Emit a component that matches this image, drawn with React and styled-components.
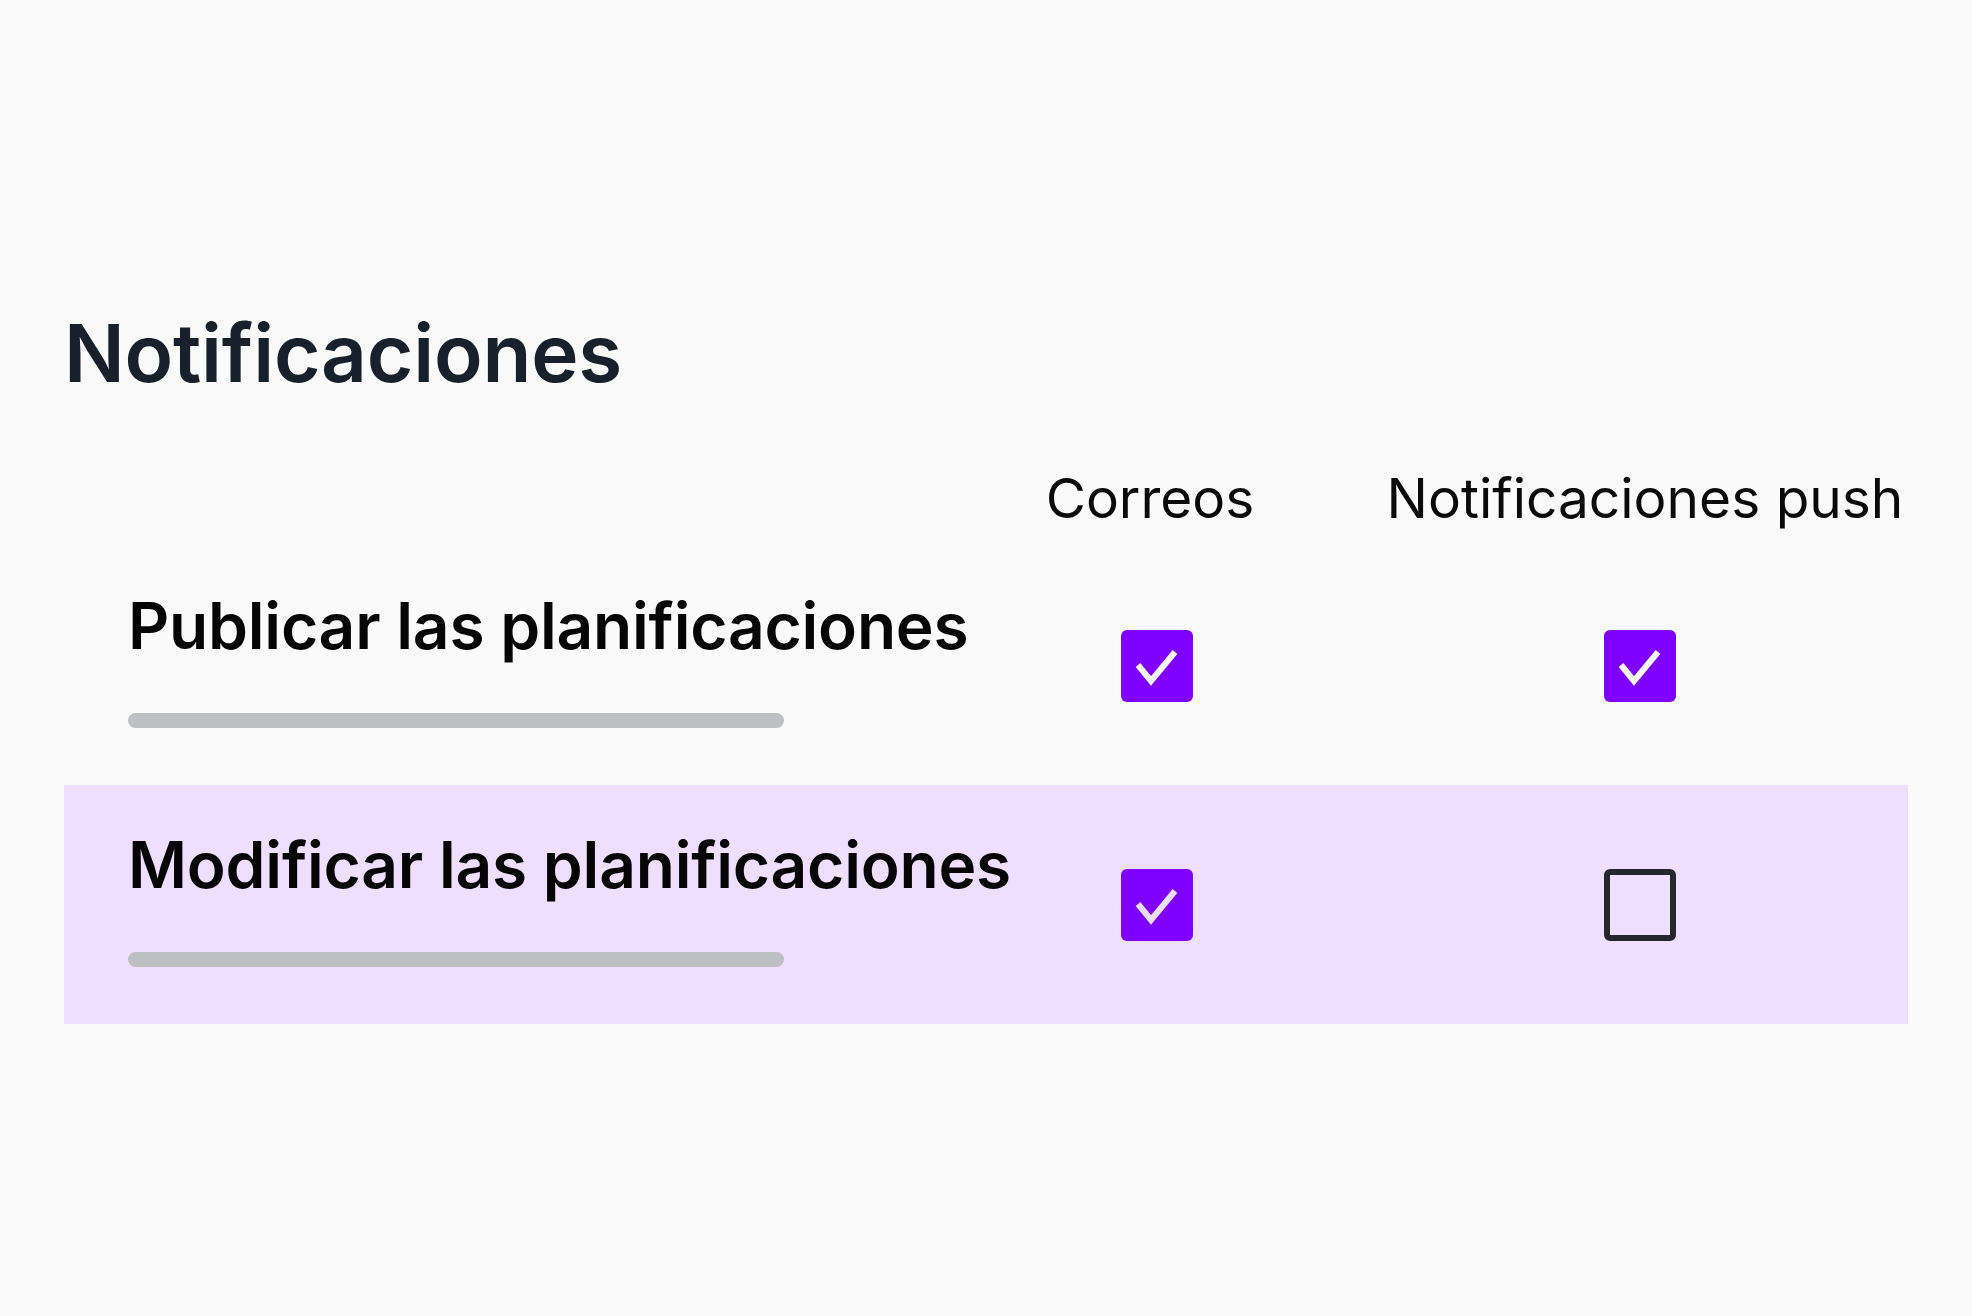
import styled, { createGlobalStyle } from "styled-components";
import { useState } from "react";

const GlobalStyle = createGlobalStyle`
  body {
    margin: 0;
    background: #fafafa;
    font-family: Inter, "Noto Sans", sans-serif;
  }
`;

const Page = styled.div`
  padding: 304px 64px 0;
`;

const Title = styled.h1`
  margin: 0 0 64px;
  font-size: 80px;
  font-weight: 600;
  line-height: normal;
  letter-spacing: -0.2px;
  color: #17202b;
`;

const Grid = styled.div`
  display: grid;
  grid-template-columns: minmax(0, 1fr) 430px 536px;
  align-items: center;
  background: ${(p) => (p.$active ? "#efdfff" : "transparent")};
`;

// headers sit a touch off the checkbox centre in the design
const ColHead = styled.div`
  text-align: center;
  font-size: 55px;
  font-weight: 400;
  line-height: normal;
  color: #0a0a0a;
  white-space: nowrap;
  padding: 0 ${(p) => (p.$shift < 0 ? -p.$shift * 2 : 0)}px 15px
    ${(p) => (p.$shift > 0 ? p.$shift * 2 : 0)}px;
`;

const Label = styled.div`
  padding: 41px 0 57px 64px;
  display: flex;
  flex-direction: column;
  gap: 49px;
`;

const LabelText = styled.div`
  font-size: 64px;
  font-weight: 600;
  line-height: normal;
  letter-spacing: -0.2px;
  color: #050505;
  white-space: nowrap;
`;

const Bar = styled.div`
  width: 656px;
  height: 15px;
  border-radius: 8px;
  background: #bebfc3;
`;

const Cell = styled.div`
  display: flex;
  justify-content: center;
`;

const Box = styled.button`
  width: 72px;
  height: 72px;
  padding: 0;
  border-radius: 6px;
  border: ${(p) => (p.$checked ? "none" : "6px solid #26272d")};
  background: ${(p) => (p.$checked ? "#8000ff" : "transparent")};
  cursor: pointer;
  display: flex;
  svg {
    display: block;
  }
`;

const Checkbox = ({ checked, tick, onToggle }) => (
  <Box $checked={checked} onClick={onToggle}>
    {checked && (
      <svg width="72" height="72" viewBox="0 0 72 72">
        <polyline
          points="17,35 30,51 54,22"
          fill="none"
          stroke={tick}
          strokeWidth="6"
        />
      </svg>
    )}
  </Box>
);

const rowsData = [
  { id: "pub", label: "Publicar las planificaciones", mail: true, push: true },
  { id: "mod", label: "Modificar las planificaciones", mail: true, push: false },
];

export default function App() {
  const [rows, setRows] = useState(rowsData);
  const active = "mod";

  const toggle = (id, key) => {
    setRows(rows.map((r) => (r.id === id ? { ...r, [key]: !r[key] } : r)));
  };

  return (
    <>
      <GlobalStyle />
      <Page>
        <Title>Notificaciones</Title>
        <Grid>
          <div />
          <ColHead $shift={-7}>Correos</ColHead>
          <ColHead $shift={5}>Notificaciones push</ColHead>
        </Grid>
        {rows.map((r) => {
          const isActive = r.id === active;
          const tick = isActive ? "#efdfff" : "#fafafa";
          return (
            <Grid key={r.id} $active={isActive}>
              <Label>
                <LabelText>{r.label}</LabelText>
                <Bar />
              </Label>
              <Cell>
                <Checkbox checked={r.mail} tick={tick} onToggle={() => toggle(r.id, "mail")} />
              </Cell>
              <Cell>
                <Checkbox checked={r.push} tick={tick} onToggle={() => toggle(r.id, "push")} />
              </Cell>
            </Grid>
          );
        })}
      </Page>
    </>
  );
}
